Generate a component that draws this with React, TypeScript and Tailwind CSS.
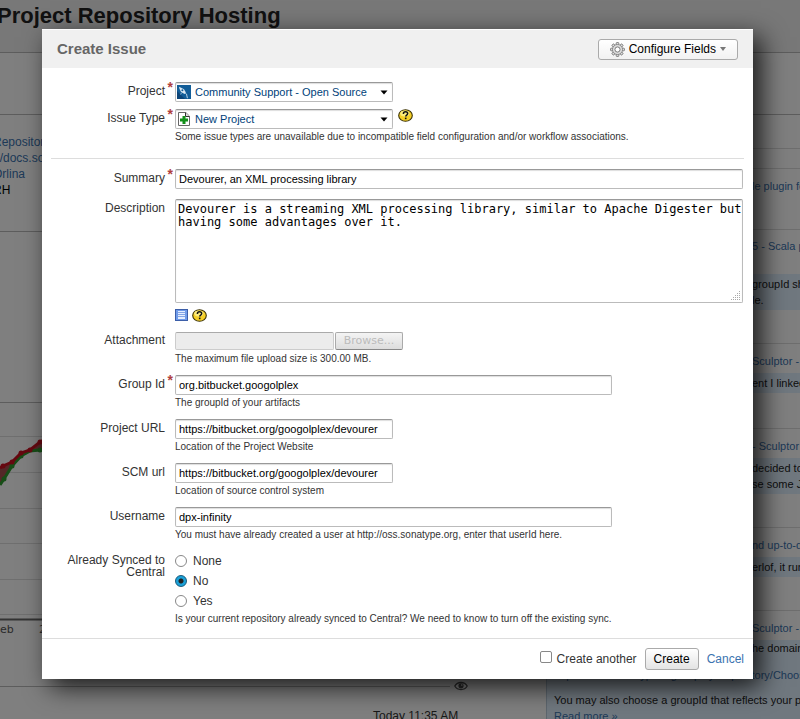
import type { ReactNode } from 'react';

const ACTIVITY = [
  { title: 'le plugin for', lines: [] as string[], box: 'h-[61px] pt-[9px]', gap: 'mt-1' },
  { title: '5 - Scala pl', lines: ['groupId sho', 'le.'], box: 'h-[114px] pt-2', gap: 'mt-5' },
  { title: 'Sculptor - c', lines: ['ent I linked'], box: 'h-[85px] pt-[9px]', gap: 'mt-1' },
  { title: '- Sculptor', lines: ['decided to', 'se some Ja'], box: 'h-[99px] pt-[9px]', gap: 'mt-1' },
  { title: 'nd up-to-d', lines: ['erlof, it runs'], box: 'h-[83px] pt-[9px]', gap: 'mt-1' },
];

const RED_POINTS = [[3, 63], [12, 59], [21, 50], [30, 47], [40, 39]];
const GREEN_POINTS = [[4, 76], [12, 63], [21, 53], [40, 47]];

function Row({ label, id, required, children }: { label: string; id?: string; required?: boolean; children: ReactNode }) {
  return (
    <div className="grid grid-cols-[123px_1fr] gap-[10px]">
      <label htmlFor={id} className="relative h-fit pt-[3px] text-right text-[12px] leading-3 text-[#333]">
        {label}
        {required && (
          <span aria-hidden="true" className="absolute -top-px -right-2 text-[14px] leading-3 font-bold text-[#b04040]">
            *
          </span>
        )}
      </label>
      <div className="min-w-0">{children}</div>
    </div>
  );
}

function Hint({ children }: { children: ReactNode }) {
  return <p className="text-[10px] leading-4 whitespace-nowrap text-[#333]">{children}</p>;
}

function TextInput({ id, value, width }: { id: string; value: string; width: string }) {
  return (
    <input
      id={id}
      type="text"
      defaultValue={value}
      className={`block h-5 rounded-[2px] border border-[#bbb] border-t-[#999] bg-white px-[3px] text-[11px] text-black shadow-[inset_0_1px_1px_#ddd] ${width}`}
    />
  );
}

function Picker({ id, value, icon }: { id: string; value: string; icon: ReactNode }) {
  return (
    <div className="relative w-[218px]">
      <select
        id={id}
        className="block h-5 w-full appearance-none rounded-[2px] border border-[#bbb] border-t-[#999] bg-white pl-[19px] text-[11px] text-[#003f7a] shadow-[inset_0_1px_1px_#ddd]"
      >
        <option>{value}</option>
      </select>
      <span className="pointer-events-none absolute top-[3px] left-[2px]">{icon}</span>
      <svg className="pointer-events-none absolute top-2 right-[5px]" width="8" height="5" viewBox="0 0 8 5">
        <path d="M0.5 0.5h7L4 4.5z" fill="#000" />
      </svg>
    </div>
  );
}

function HelpIcon() {
  return (
    <svg width="15" height="13" viewBox="0 0 15 13" aria-label="Help">
      <ellipse cx="7.5" cy="6.5" rx="6.8" ry="5.8" fill="#f6cf26" stroke="#3a3206" strokeWidth="1.1" />
      <ellipse cx="6.8" cy="4.6" rx="4.6" ry="3" fill="#fdec7c" />
      <path d="M5.4 4.9c0-1.3.8-2.1 2.1-2.1s2.2.7 2.2 1.8c0 1.4-2 1.5-2 2.9" fill="none" stroke="#111" strokeWidth="1.5" />
      <rect x="6.9" y="8.6" width="1.6" height="1.6" fill="#111" />
    </svg>
  );
}

function ProjectIcon() {
  return (
    <svg width="14" height="14" viewBox="0 0 14 14" className="block">
      <rect width="14" height="14" fill="#125d98" />
      <path d="M0 14V6l8 8z" fill="#0b4478" />
      <path d="M2 1.8l1.6.6 3.4 1.8 1.9 3.4-1.3 1.3-3.6-1.9-1.4-3z" fill="#dbe9f3" />
      <path d="M8.2 8.2l1.3.8.9 4.2" stroke="#b9d4e6" strokeWidth="1" fill="none" />
      <path d="M4.5 7.8L3.600 9.500" stroke="#8fb5d2" />
      <circle cx="5.400" cy="5.300" r="1" fill="#125d98" />
    </svg>
  );
}

function NewProjectIcon() {
  return (
    <svg width="14" height="14" viewBox="0 0 14 14" className="block">
      <path d="M1.5.5h7.300l3.700 3.700v9.300h-11z" fill="#fff" stroke="#666" />
      <path d="M8.500.5v4h4" fill="#ddd" stroke="#333" />
      <path d="M5.500 4h3v2.500H11v3H8.500V12h-3V9.500H3v-3h2.500z" fill="#12901a" />
    </svg>
  );
}

function WikiIcon() {
  return (
    <svg width="13" height="12" viewBox="0 0 13 12" aria-label="Preview">
      <rect x=".5" y=".5" width="12" height="11" fill="#6f9bea" stroke="#3c5ea8" />
      <rect x="3" y="2" width="7" height="8" fill="#e4eeff" />
      <path d="M3 3.500h7M3 5.500h7M3 7.500h7" stroke="#85a6e6" />
    </svg>
  );
}

function GearIcon() {
  return (
    <svg width="15" height="15" viewBox="0 0 14 14">
      <g fill="#ddd" stroke="#777" strokeWidth=".8">
        {[0, 45, 90, 135, 180, 225, 270, 315].map((angle) => (
          <rect key={angle} x="5.800" y=".5" width="2.400" height="3" rx=".6" transform={`rotate(${angle} 7 7)`} />
        ))}
        <circle cx="7" cy="7" r="4.600" />
      </g>
      <circle cx="7" cy="7" r="4" fill="#ddd" />
      <circle cx="7" cy="7" r="2.400" fill="#fff" stroke="#777" strokeWidth=".9" />
    </svg>
  );
}

function EyeIcon() {
  return (
    <svg width="14" height="10" viewBox="0 0 14 10">
      <path d="M.8 5C3.500.3 10.500.3 13.200 5 10.500 9.700 3.500 9.700.8 5z" fill="none" stroke="#555" strokeWidth="1.300" />
      <circle cx="7" cy="4.800" r="2.600" fill="#555" />
      <circle cx="7.800" cy="4" r=".8" fill="#fff" />
    </svg>
  );
}

function Chart() {
  return (
    <svg className="block w-full" height="236">
      <path d="M0 33.500h546M0 69.500h546M0 105.500h546M0 140.500h546M0 176.500h546M0 211.500h546" stroke="#dedede" />
      <path d="M0 65L3 63 12 59 21 50 30 47 21 53 12 63 4 76 0 82z" fill="#a85050" />
      <path d="M30 47L40 39 50 34V46L40 47z" fill="#a85050" />
      <path d="M0 82L4 76 12 63 21 53 30 48 40 47 50 46" fill="none" stroke="#2f9c2f" strokeWidth="3" />
      {GREEN_POINTS.map(([x, y]) => (
        <circle key={x} cx={x} cy={y} r="2.500" fill="#2f9c2f" />
      ))}
      <path d="M0 65L3 63 12 59 21 50 30 47 40 39 50 34" fill="none" stroke="#cc1020" strokeWidth="3" />
      {RED_POINTS.map(([x, y]) => (
        <circle key={x} cx={x} cy={y} r="2.500" fill="#cc1020" />
      ))}
      <path d="M0 216.500h546" stroke="#666" strokeWidth="2" />
      <g fontFamily="DejaVu Sans" fontSize="11" fill="#555">
        <text x="0" y="230">eb</text>
        <text x="39" y="230">2</text>
      </g>
    </svg>
  );
}

function Backdrop() {
  return (
    <div className="min-h-[719px] bg-white text-[12px]" aria-hidden="true">
      <header className="h-[53px] border-b border-[#bbb] bg-[#f0f0f0] pt-[2px]">
        <h1 className="-ml-[3px] text-[22px] leading-7 font-bold whitespace-nowrap text-[#222]">Project Repository Hosting</h1>
      </header>
      <div className="h-[62px] border-b border-[#bbb]" />
      <div className="grid grid-cols-[530px_1fr] gap-4">
        <div>
          <div className="h-[117px] border-b border-[#bbb] pt-[19px] leading-4 text-[#3b73af]">
            <div className="-ml-[7px]">
              <p>Repository</p>
              <p>://docs.sonatype</p>
              <p>Orlina</p>
              <p className="text-black">RH</p>
            </div>
          </div>
          <div className="h-[171px] border-b border-[#bbb]" />
          <Chart />
          <div className="flex h-[55px] w-[468px] items-end gap-1">
            <div className="mb-[7px] flex-1 border-t border-[#bbb]" />
            <div className="pb-[3px]">
              <EyeIcon />
            </div>
          </div>
          <p className="pt-[14px] pl-[373px] leading-4 whitespace-nowrap text-[#333]">Today 11:35 AM</p>
        </div>
        <div className="min-w-0 overflow-hidden text-[11px] whitespace-nowrap">
          <div className="mt-[33px] h-[21px] border-y border-[#ddd]" />
          {ACTIVITY.map((entry) => (
            <div key={entry.title} className={`border-b border-[#ddd] ${entry.box}`}>
              <p className="pl-[206px] leading-4 text-[#3b73af]">{entry.title}</p>
              {entry.lines.length > 0 && (
                <div className={`bg-[#e0f0ff] py-0.5 pl-[206px] leading-4 text-[#222] ${entry.gap}`}>
                  {entry.lines.map((line) => (
                    <p key={line}>{line}</p>
                  ))}
                </div>
              )}
            </div>
          ))}
          <p className="pt-[9px] pl-[206px] leading-4 text-[#3b73af]">Sculptor - c</p>
          <div className="mt-1 border-l border-[#bcd] bg-[#e0f0ff] pl-[7px] leading-4 text-[#222]">
            <p className="pl-[198px]">he domain</p>
            <p className="pt-[11px] text-[#3b73af]">https://docs.sonatype.org/display/Repository/Choosing</p>
            <p className="pt-[9px]">You may also choose a groupId that reflects your project</p>
            <p className="text-[#3b73af]">Read more »</p>
          </div>
        </div>
      </div>
    </div>
  );
}

export default function App() {
  return (
    <div className="relative h-screen overflow-hidden font-['Liberation_Sans',Arial,sans-serif]">
      <Backdrop />
      <div className="absolute inset-0 bg-black/50 pt-[29px] pr-[47px] pl-[42px]">
        <form role="dialog" aria-label="Create Issue" className="border-y border-white bg-white shadow-[8px_8px_24px_rgba(0,0,0,0.8)]">
          <header className="flex h-[38px] items-center justify-between bg-[#f0f0f0] px-[15px]">
            <h2 className="text-[15px] font-bold text-[#666]">Create Issue</h2>
            <button
              type="button"
              className="flex h-[21px] items-center gap-1 rounded-[3px] border border-[#aaa] bg-linear-to-b from-white to-[#f2f2f2] px-[11px] text-[12px] text-black"
            >
              <GearIcon />
              Configure Fields
              <svg width="6" height="4" viewBox="0 0 6 4">
                <path d="M0 0h6L3 4z" fill="#777" />
              </svg>
            </button>
          </header>

          <div className="flex flex-col gap-[7px] pt-[14px] pr-[10px] pb-[13px]">
            <Row label="Project" id="project" required>
              <Picker id="project" value="Community Support - Open Source" icon={<ProjectIcon />} />
            </Row>
            <Row label="Issue Type" id="issue-type" required>
              <div className="flex gap-[5px]">
                <Picker id="issue-type" value="New Project" icon={<NewProjectIcon />} />
                <HelpIcon />
              </div>
              <Hint>Some issue types are unavailable due to incompatible field configuration and/or workflow associations.</Hint>
            </Row>
          </div>
          <hr className="mr-[9px] ml-[9px] border-[#ddd]" />

          <div className="flex flex-col gap-2 pt-[10px] pr-[10px] pb-[11px]">
            <Row label="Summary" id="summary" required>
              <TextInput id="summary" value="Devourer, an XML processing library" width="w-full" />
            </Row>
            <div className="pt-0.5">
              <Row label="Description" id="description">
                <div className="relative">
                  <textarea
                    id="description"
                    defaultValue={'Devourer is a streaming XML processing library, similar to Apache Digester but\nhaving some advantages over it.'}
                    className="block h-[104px] w-full resize-none overflow-hidden rounded-[2px] border border-[#bbb] border-t-[#999] bg-white py-[3px] pl-[2px] font-['DejaVu_Sans_Mono',monospace] text-[12px] leading-[13px] whitespace-pre text-black shadow-[inset_0_1px_1px_#ddd]"
                  />
                  <svg className="pointer-events-none absolute right-[3px] bottom-[3px]" width="9" height="9" viewBox="0 0 9 9">
                    <path d="M8 0h1v1H8zM6 2h1v1H6zM8 2h1v1H8zM4 4h1v1H4zM6 4h1v1H6zM8 4h1v1H8zM2 6h1v1H2zM4 6h1v1H4zM6 6h1v1H6zM8 6h1v1H8zM0 8h1v1H0zM2 8h1v1H2zM4 8h1v1H4zM6 8h1v1H6zM8 8h1v1H8z" fill="#aaa" />
                  </svg>
                </div>
                <div className="mt-1 flex h-4 items-center gap-1">
                  <WikiIcon />
                  <HelpIcon />
                </div>
              </Row>
            </div>
            <Row label="Attachment" id="attachment">
              <div className="flex h-5 items-center gap-px">
                <input
                  id="attachment"
                  type="text"
                  disabled
                  className="h-[18px] w-[159px] rounded-[2px] border border-[#ccc] border-t-[#aaa] bg-[#ececec]"
                />
                <button
                  type="button"
                  disabled
                  className="h-[18px] w-[68px] rounded-[2px] border border-[#aaa] border-b-[#888] bg-linear-to-b from-[#f4f4f4] to-[#ddd] font-['DejaVu_Sans',sans-serif] text-[11px] leading-4 text-[#bbb]"
                >
                  Browse...
                </button>
              </div>
              <Hint>The maximum file upload size is 300.00 MB.</Hint>
            </Row>
            <Row label="Group Id" id="group" required>
              <TextInput id="group" value="org.bitbucket.googolplex" width="w-[437px]" />
              <Hint>The groupId of your artifacts</Hint>
            </Row>
            <Row label="Project URL" id="project-url">
              <TextInput id="project-url" value="https://bitbucket.org/googolplex/devourer" width="w-[218px]" />
              <Hint>Location of the Project Website</Hint>
            </Row>
            <Row label="SCM url" id="scm-url">
              <TextInput id="scm-url" value="https://bitbucket.org/googolplex/devourer" width="w-[218px]" />
              <Hint>Location of source control system</Hint>
            </Row>
            <Row label="Username" id="username">
              <TextInput id="username" value="dpx-infinity" width="w-[437px]" />
              <Hint>You must have already created a user at http://oss.sonatype.org, enter that userId here.</Hint>
            </Row>
            <Row label="Already Synced to Central">
              {['None', 'No', 'Yes'].map((option) => (
                <label key={option} className="flex h-5 items-center gap-[6px] text-[12px] text-[#333]">
                  <input
                    type="radio"
                    name="synced"
                    defaultChecked={option === 'No'}
                    className="size-3 appearance-none rounded-full border border-[#888] bg-white checked:border-[#145a7c] checked:bg-[radial-gradient(circle,#222_0_2px,#1ba1d8_3px)]"
                  />
                  {option}
                </label>
              ))}
              <Hint>Is your current repository already synced to Central? We need to know to turn off the existing sync.</Hint>
            </Row>
          </div>

          <footer className="flex h-10 items-center justify-end border-t border-[#ddd] pr-[9px] text-[12px]">
            <label className="flex items-center gap-[5px] text-[#333]">
              <input type="checkbox" className="mb-1 size-3 appearance-none rounded-[2px] border border-[#888] bg-white" />
              Create another
            </label>
            <button
              type="button"
              className="ml-2 h-[22px] rounded-[3px] border border-[#aaa] bg-linear-to-b from-white to-[#e4e4e4] px-2 text-black"
            >
              Create
            </button>
            <a href="#cancel" className="ml-2 text-[#3b73af]">
              Cancel
            </a>
          </footer>
        </form>
      </div>
    </div>
  );
}
